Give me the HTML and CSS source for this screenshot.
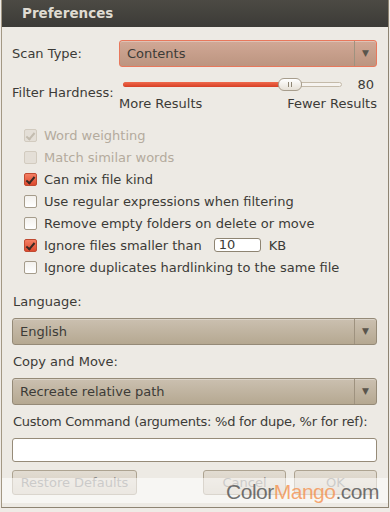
FILE: index.html
```html
<!DOCTYPE html>
<html lang="en">

<head>
    <meta charset="UTF-8">
    <meta name="viewport" content="width=device-width, initial-scale=1.0">
    <title>Preferences</title>
    <link rel="stylesheet" href="styles.css">
</head>

<body>
    <div class="window">
        <div class="titlebar">Preferences</div>

        <div class="content">
            <div class="row scan-row">
                <span class="label">Scan Type:</span>
                <div class="combo combo-focus">
                    <span class="combo-text">Contents</span>
                    <span class="combo-arrow">&#9660;</span>
                </div>
            </div>

            <div class="row hardness-row">
                <span class="label hardness-label">Filter Hardness:</span>
                <div class="slider-box">
                    <div class="slider-line">
                        <div class="track">
                            <div class="track-fill" style="width: 74%"></div>
                            <div class="thumb" style="left: 71%"><i></i><i></i></div>
                        </div>
                        <span class="slider-value">80</span>
                    </div>
                    <div class="slider-ends">
                        <span>More Results</span>
                        <span>Fewer Results</span>
                    </div>
                </div>
            </div>

            <div class="checks">
                <label class="check disabled"><span class="box on"></span>Word weighting</label>
                <label class="check disabled"><span class="box"></span>Match similar words</label>
                <label class="check"><span class="box on"></span>Can mix file kind</label>
                <label class="check"><span class="box"></span>Use regular expressions when filtering</label>
                <label class="check"><span class="box"></span>Remove empty folders on delete or move</label>
                <label class="check"><span class="box on"></span>Ignore files smaller than
                    <span class="small-entry">10</span><span class="unit">KB</span></label>
                <label class="check"><span class="box"></span>Ignore duplicates hardlinking to the same file</label>
            </div>

            <div class="field-label lang-label">Language:</div>
            <div class="combo">
                <span class="combo-text">English</span>
                <span class="combo-arrow">&#9660;</span>
            </div>

            <div class="field-label">Copy and Move:</div>
            <div class="combo">
                <span class="combo-text">Recreate relative path</span>
                <span class="combo-arrow">&#9660;</span>
            </div>

            <div class="field-label command-label">Custom Command (arguments: %d for dupe, %r for ref):</div>
            <div class="entry"></div>

            <div class="buttons">
                <span class="button restore">Restore Defaults</span>
                <span class="spacer"></span>
                <span class="button cancel">Cancel</span>
                <span class="button ok">OK</span>
            </div>
        </div>

        <div class="watermark">
            <span class="wm-grey">Color</span><span class="wm-orange">Mango</span><span class="wm-grey">.com</span>
        </div>
    </div>
</body>

</html>
```

FILE: styles.css
```css
body {
    margin: 0;
    background-color: #efebe6;
    font-family: "DejaVu Sans", sans-serif;
    font-size: 13px;
    color: #3c3b37;
    overflow: hidden;
}

.window {
    position: relative;
    height: 508px;
    background-color: #edeae4;
    border-left: 1px solid #a39884;
    border-right: 1px solid #8e8472;
    border-bottom: 1px solid #8e8472;
    margin: 0 1px 0 1px;
    box-sizing: border-box;
}

.titlebar {
    height: 27px;
    line-height: 27px;
    padding-left: 20px;
    background: linear-gradient(#4c4a44, #3c3b37);
    color: #dfdbd2;
    font-weight: bold;
    font-size: 13.5px;
}

.content {
    padding: 13px 11px 0 10px;
}

.row {
    display: flex;
}

.scan-row {
    align-items: center;
    height: 27px;
}

.label {
    width: 107px;
}

.combo {
    flex: 1;
    display: flex;
    align-items: center;
    height: 27px;
    box-sizing: border-box;
    border: 1px solid #958a77;
    border-radius: 3px;
    background: linear-gradient(#cbc0b0, #b5a891);
    box-shadow: inset 0 1px 0 rgba(255, 255, 255, 0.3);
}

.combo-focus {
    border-color: #e8785c;
    background: linear-gradient(#d1a896, #bc9580);
}

.combo-text {
    flex: 1;
    padding-left: 7px;
}

.combo-arrow {
    width: 21px;
    height: 100%;
    border-left: 1px solid #9e927f;
    text-align: center;
    line-height: 25px;
    font-size: 9px;
    color: #5a554c;
}

.hardness-row {
    margin-top: 11px;
}

.hardness-label {
    padding-top: 7px;
}

.slider-box {
    flex: 1;
}

.slider-line {
    display: flex;
    align-items: center;
    height: 13px;
    padding-left: 4px;
}

.track {
    position: relative;
    width: 219px;
    height: 5px;
    box-sizing: border-box;
    border: 1px solid #c4baa9;
    border-radius: 3px;
    background-color: #f6f3ef;
}

.track-fill {
    height: 5px;
    margin: -1px;
    border-radius: 3px;
    background: linear-gradient(#f06a4c, #d63f25);
}

.thumb {
    position: absolute;
    top: -5px;
    width: 24px;
    height: 13px;
    box-sizing: border-box;
    border: 1px solid #a79d8c;
    border-radius: 6px;
    background: linear-gradient(#ffffff, #e6e0d6);
    display: flex;
    justify-content: center;
    align-items: center;
    gap: 2px;
}

.thumb i {
    width: 1px;
    height: 5px;
    background-color: #8f8674;
}

.slider-value {
    flex: 1;
    text-align: right;
    padding-right: 3px;
}

.slider-ends {
    display: flex;
    justify-content: space-between;
    margin-top: 5px;
}

.checks {
    margin-top: 13px;
    padding-left: 12px;
}

.check {
    display: flex;
    align-items: center;
    height: 22px;
}

.check.disabled {
    color: #b4ab9d;
}

.box {
    width: 13px;
    height: 13px;
    box-sizing: border-box;
    margin-right: 7px;
    border: 1px solid #a59c8b;
    border-radius: 2px;
    background: linear-gradient(#f3f1ed, #ffffff);
    position: relative;
}

.box.on {
    border-color: #c04a31;
    background: linear-gradient(#f47f63, #dd4a2f);
}

.box.on::after {
    content: "";
    position: absolute;
    left: 3px;
    top: 1px;
    width: 3px;
    height: 7px;
    border-right: 2px solid #3a2a24;
    border-bottom: 2px solid #3a2a24;
    transform: rotate(40deg);
}

.disabled .box {
    border-color: #d2cbbf;
    background: #e4dfd7;
}

.disabled .box.on::after {
    border-color: #c3bcaf;
}

.small-entry {
    width: 47px;
    height: 14px;
    box-sizing: border-box;
    margin-left: 12px;
    border: 1px solid #8e8472;
    border-radius: 3px;
    background-color: #ffffff;
    line-height: 12px;
    padding-left: 4px;
}

.unit {
    margin-left: 8px;
}

.field-label {
    height: 17px;
    line-height: 17px;
    margin: 8px 0 8px 1px;
    white-space: nowrap;
}

.lang-label {
    margin-top: 15px;
}

.command-label {
    letter-spacing: -0.25px;
}

.entry {
    height: 24px;
    box-sizing: border-box;
    border: 1px solid #968b78;
    border-radius: 3px;
    background-color: #ffffff;
}

.buttons {
    display: flex;
    margin-top: 8px;
    gap: 8px;
}

.spacer {
    flex: 1;
}

.button {
    height: 25px;
    box-sizing: border-box;
    border: 1px solid #ada391;
    border-radius: 3px;
    background: linear-gradient(#e2dcd2, #d3cbbd);
    text-align: center;
    line-height: 23px;
    color: #8c8b88;
}

.restore {
    width: 125px;
}

.cancel {
    width: 83px;
}

.ok {
    width: 83px;
}

.watermark {
    position: absolute;
    left: 0;
    right: 0;
    top: 478px;
    height: 25px;
    background-color: rgba(255, 255, 255, 0.55);
    text-align: right;
    padding-right: 9px;
    font-family: "Liberation Sans", sans-serif;
    font-size: 21px;
    letter-spacing: -0.5px;
    line-height: 27px;
}

.wm-grey {
    color: rgba(70, 70, 70, 0.75);
}

.wm-orange {
    color: rgba(244, 140, 70, 0.75);
}
```
